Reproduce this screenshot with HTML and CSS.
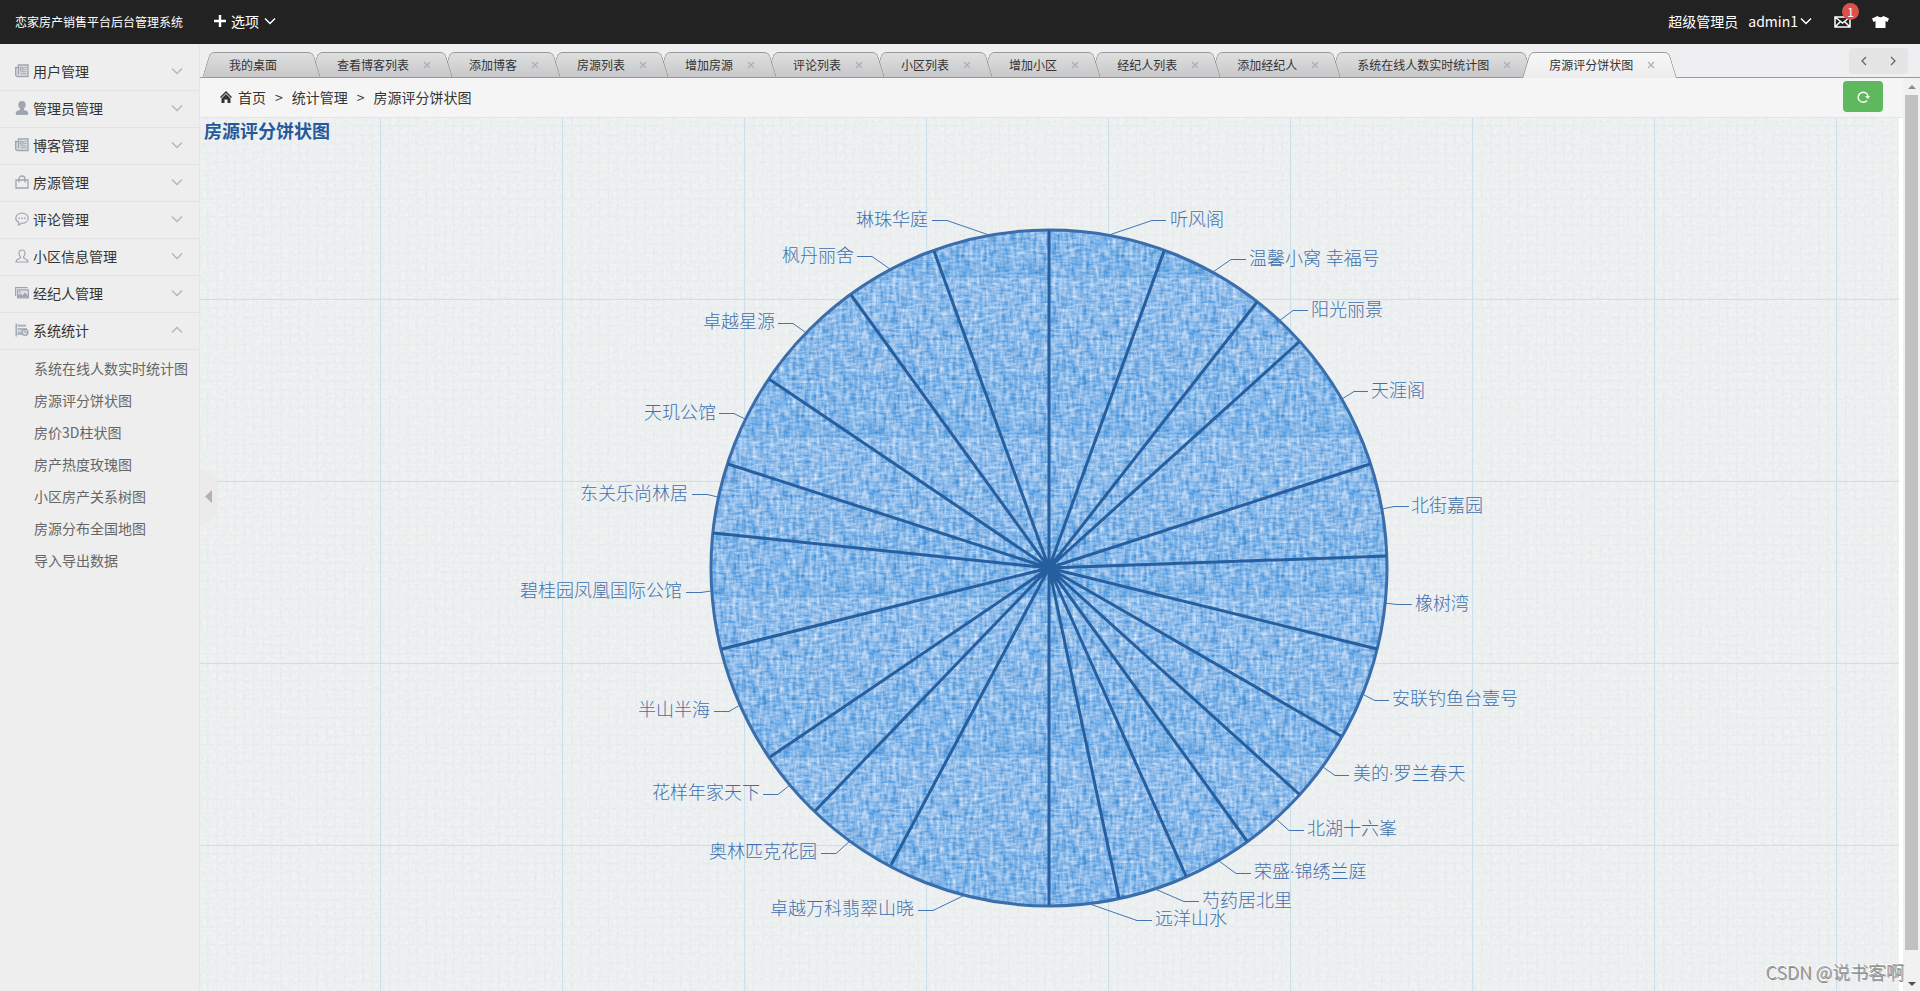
FILE: index.html
```html
<!DOCTYPE html>
<html lang="zh-CN">
<head>
<meta charset="utf-8">
<title>恋家房产销售平台后台管理系统</title>
<link rel="stylesheet" href="styles.css">
</head>
<body>
<svg class="sprite" aria-hidden="true">
  <symbol id="down" viewBox="0 0 12 8"><path d="M1 1.500 6 6.500 11 1.500" fill="none" stroke="currentColor" stroke-width="1.500"/></symbol>
  <symbol id="news" viewBox="0 0 14 14"><path d="M3.500 1h9.500v11.500H2.500A1.800 1.800 0 0 1 .700 10.700V3.500h2.800zM3.500 3.500v7" fill="#dcdfe4" stroke="currentColor" stroke-width="1.400"/><path d="M5.500 3.500H8V6H5.500zM9.300 3.500h2.200M9.300 5.500h2.200M5.500 7.700h6M5.500 9.700h6" fill="none" stroke="currentColor" stroke-width="1.100"/></symbol>
  <symbol id="person" viewBox="0 0 14 14"><path d="M7 0c2.500 0 3.700 1.600 3.700 3.800 0 1.600-.7 2.900-1.700 3.800v1.200c.7.900 4.300.9 4.300 3.200 0 1.100-.5 2-1.300 2H2c-.800 0-1.300-.900-1.300-2C.700 9.700 4.300 9.700 5 8.800V7.600C4 6.700 3.300 5.400 3.300 3.800 3.300 1.600 4.500 0 7 0z" fill="currentColor"/></symbol>
  <symbol id="person-o" viewBox="0 0 14 14"><path d="M7 1c2 0 3 1.300 3 3.200 0 1.500-.5 2.600-1.400 3.400v1.200c.5 1.200 4.400.9 4.400 4.200H1c0-3.300 3.900-3 4.400-4.200V7.600C4.500 6.800 4 5.700 4 4.200 4 2.300 5 1 7 1z" fill="none" stroke="currentColor" stroke-width="1.200"/></symbol>
  <symbol id="bag" viewBox="0 0 14 14"><path d="M1 5h12v8H1zM4 7.500V4a3 3 0 0 1 6 0v3.500" fill="none" stroke="currentColor" stroke-width="1.300"/></symbol>
  <symbol id="talk" viewBox="0 0 14 14"><path d="M7 1.200c3.600 0 6.200 2.100 6.200 5s-2.600 5-6.200 5l-3.600 1.800.4-2.600C1.900 9.500.800 8 .800 6.200c0-2.900 2.600-5 6.200-5z" fill="none" stroke="currentColor" stroke-width="1.200"/><path d="M3.500 5.500H5V7H3.500zM6.300 5.500h1.500V7H6.300zM9 5.500h1.500V7H9z" fill="currentColor"/></symbol>
  <symbol id="image" viewBox="0 0 14 14"><path d="M.6 10V1.700h12" fill="none" stroke="currentColor" stroke-width="1.300"/><path d="M2.600 3.800h10.800v8H2.600z" fill="#dcdfe4" stroke="currentColor" stroke-width="1.200"/><path d="M3 11.500V9.500l2.500-2 2 2L10 6.500l3 3v2z" fill="currentColor"/><circle cx="5" cy="5.800" r=".9" fill="currentColor"/></symbol>
  <symbol id="stats" viewBox="0 0 14 14"><path d="M1.200.500v13" stroke="currentColor" stroke-width="1.400"/><path d="M2.500 1.500h8.500v2.200H2.500zM2.500 5h9.500v2.200H2.500zM2.500 8.500H7v3.500H2.500z" fill="currentColor" opacity=".8"/><circle cx="10" cy="9.300" r="3" fill="#dcdfe4" stroke="currentColor" stroke-width="1.300"/><path d="M10 6.500v3h3" fill="none" stroke="currentColor"/></symbol>
  <symbol id="cross" viewBox="0 0 8 8"><path d="m1 1 6 6M7 1 1 7" stroke="currentColor" stroke-width="1.300"/></symbol>
</svg>

<header class="topbar">
  <a class="brand" href="#">恋家房产销售平台后台管理系统</a>
  <button class="top-link options" type="button">
    <svg class="plus" viewBox="0 0 12 12"><path d="M6 0v12M0 6h12" stroke="currentColor" stroke-width="2.400"/></svg>
    选项<svg class="caret"><use href="#down"/></svg>
  </button>
  <div class="account">
    <span>超级管理员</span>
    <button class="top-link" type="button">admin1<svg class="caret"><use href="#down"/></svg></button>
    <a class="mail" href="#" aria-label="消息">
      <svg viewBox="0 0 17 12"><path d="M1 1h15v10H1zM1 1l7.500 6L16 1M1 11l5-5M16 11l-5-5" fill="none" stroke="currentColor" stroke-width="1.500"/></svg>
      <span class="badge">1</span>
    </a>
    <button class="top-link" type="button" aria-label="换肤">
      <svg class="shirt" viewBox="0 0 17 12"><path d="M5.500 0Q8.500 2.500 11.500 0L17 2.500 15.500 6 13.500 5V12h-10V5L1.500 6 0 2.500z" fill="currentColor"/></svg>
    </button>
  </div>
</header>

<div class="body">
  <nav class="sidebar">
    <button class="group" type="button"><svg><use href="#news"/></svg>用户管理<svg class="arrow"><use href="#down"/></svg></button>
    <button class="group" type="button"><svg><use href="#person"/></svg>管理员管理<svg class="arrow"><use href="#down"/></svg></button>
    <button class="group" type="button"><svg><use href="#news"/></svg>博客管理<svg class="arrow"><use href="#down"/></svg></button>
    <button class="group" type="button"><svg><use href="#bag"/></svg>房源管理<svg class="arrow"><use href="#down"/></svg></button>
    <button class="group" type="button"><svg><use href="#talk"/></svg>评论管理<svg class="arrow"><use href="#down"/></svg></button>
    <button class="group" type="button"><svg><use href="#person-o"/></svg>小区信息管理<svg class="arrow"><use href="#down"/></svg></button>
    <button class="group" type="button"><svg><use href="#image"/></svg>经纪人管理<svg class="arrow"><use href="#down"/></svg></button>
    <button class="group open" type="button" aria-expanded="true"><svg><use href="#stats"/></svg>系统统计<svg class="arrow"><use href="#down"/></svg></button>
    <ul class="sub">
      <li><a href="#">系统在线人数实时统计图</a></li>
      <li><a href="#">房源评分饼状图</a></li>
      <li><a href="#">房价3D柱状图</a></li>
      <li><a href="#">房产热度玫瑰图</a></li>
      <li><a href="#">小区房产关系树图</a></li>
      <li><a href="#">房源分布全国地图</a></li>
      <li><a href="#">导入导出数据</a></li>
    </ul>
  </nav>

  <main class="main">
    <button class="fold" type="button" aria-label="收起菜单"><svg viewBox="0 0 17 58"><path d="M0 0 17 9v40L0 58z" fill="#ebebeb"/><path d="M12 22v13l-7-6.500z" fill="#b2b2b2"/></svg></button>
    <div class="tabbar">
      <ul class="tabs">
        <li class="tab"><span>我的桌面</span></li>
        <li class="tab"><span>查看博客列表</span><button type="button" aria-label="关闭"><svg><use href="#cross"/></svg></button></li>
        <li class="tab"><span>添加博客</span><button type="button" aria-label="关闭"><svg><use href="#cross"/></svg></button></li>
        <li class="tab"><span>房源列表</span><button type="button" aria-label="关闭"><svg><use href="#cross"/></svg></button></li>
        <li class="tab"><span>增加房源</span><button type="button" aria-label="关闭"><svg><use href="#cross"/></svg></button></li>
        <li class="tab"><span>评论列表</span><button type="button" aria-label="关闭"><svg><use href="#cross"/></svg></button></li>
        <li class="tab"><span>小区列表</span><button type="button" aria-label="关闭"><svg><use href="#cross"/></svg></button></li>
        <li class="tab"><span>增加小区</span><button type="button" aria-label="关闭"><svg><use href="#cross"/></svg></button></li>
        <li class="tab"><span>经纪人列表</span><button type="button" aria-label="关闭"><svg><use href="#cross"/></svg></button></li>
        <li class="tab"><span>添加经纪人</span><button type="button" aria-label="关闭"><svg><use href="#cross"/></svg></button></li>
        <li class="tab"><span>系统在线人数实时统计图</span><button type="button" aria-label="关闭"><svg><use href="#cross"/></svg></button></li>
        <li class="tab active"><span>房源评分饼状图</span><button type="button" aria-label="关闭"><svg><use href="#cross"/></svg></button></li>
      </ul>
      <div class="pager">
        <button type="button" aria-label="向左"><svg viewBox="0 0 6 10"><path d="M5 1 1 5l4 4" fill="none" stroke="currentColor" stroke-width="1.300"/></svg></button>
        <button type="button" aria-label="向右"><svg viewBox="0 0 6 10"><path d="m1 1 4 4-4 4" fill="none" stroke="currentColor" stroke-width="1.300"/></svg></button>
      </div>
    </div>

    <div class="frame">
      <div class="page">
        <div class="crumbs">
          <svg class="home" viewBox="0 0 12 12"><path d="M6 0 0 6l1 1 5-5 5 5 1-1z" fill="currentColor"/><path d="m6 3 4.500 4.500V12h-3V8.500h-3V12h-3V7.500z" fill="currentColor"/></svg>
          <a href="#">首页</a><span class="sep">&gt;</span><span>统计管理</span><span class="sep">&gt;</span><span>房源评分饼状图</span>
          <button class="refresh" type="button" aria-label="刷新"><svg viewBox="0 0 14 14"><path d="M11 10.500A5 5 0 1 1 12 6" fill="none" stroke="currentColor" stroke-width="1.400"/><path d="M9 6h5l-2 3z" fill="currentColor"/></svg></button>
        </div>
        <div class="chart">
          <svg class="paper" aria-hidden="true">
            <defs>
              <filter id="grain" x="0" y="0" width="182" height="182" filterUnits="userSpaceOnUse" color-interpolation-filters="sRGB">
                <feTurbulence type="fractalNoise" baseFrequency="0.3" numOctaves="3" seed="4" stitchTiles="stitch"/>
                <feColorMatrix values=".06 0 0 0 .902  .05 0 0 0 .917  .05 0 0 0 .918  0 0 0 0 1"/>
              </filter>
              <pattern id="minor" width="9.100" height="9.100" patternUnits="userSpaceOnUse"><path d="M8 0v9.100M0 8h9.100" stroke="#c9d8dd" stroke-opacity=".2"/></pattern>
              <pattern id="sheet" width="182" height="182" patternUnits="userSpaceOnUse">
                <rect width="182" height="182" filter="url(#grain)"/>
                <rect width="182" height="182" fill="url(#minor)"/>
                <path d="M180.500 0v182M0 181.500h182" stroke="#cde0ea"/>
              </pattern>
            </defs>
            <rect width="100%" height="100%" fill="url(#sheet)"/>
          </svg>
          <svg class="pie" viewBox="200 118 1699 873" role="img" aria-label="房源评分饼状图">
            <defs>
              <filter id="pencil" x="0" y="0" width="160" height="160" filterUnits="userSpaceOnUse" color-interpolation-filters="sRGB">
                <feTurbulence type="fractalNoise" baseFrequency="0.3 0.06" numOctaves="4" seed="7" stitchTiles="stitch" result="v"/>
                <feTurbulence type="fractalNoise" baseFrequency="0.1 0.35" numOctaves="3" seed="12" stitchTiles="stitch" result="h"/>
                <feComposite in="v" in2="h" operator="arithmetic" k2=".5" k3=".5"/>
                <feColorMatrix values="1.400 0 0 0 -.16  .8 0 0 0 .33  .3 0 0 0 .765  0 0 0 0 1"/>
              </filter>
              <linearGradient id="band" x2="0" y2="1"><stop offset="0" stop-color="#a6c8f0" stop-opacity=".25"/><stop offset=".4" stop-color="#8ab4e6" stop-opacity=".2"/><stop offset="1" stop-color="#6aa8e4" stop-opacity=".25"/></linearGradient>
              <pattern id="crayon" x="200" y="118" width="160" height="160" patternUnits="userSpaceOnUse">
                <rect width="160" height="160" filter="url(#pencil)"/>
                <rect width="160" height="160" fill="url(#band)"/>
              </pattern>
            </defs>
            <text class="title" x="204" y="138">房源评分饼状图</text>
            <circle class="disc" cx="1049" cy="568" r="338" fill="url(#crayon)"/>
            <path class="spokes" d="M1049 568V230M1049 568 1164 251M1049 568 1257 302M1049 568 1299 342M1049 568 1370 464M1049 568 1387 556M1049 568 1377 649M1049 568 1341 736M1049 568 1299 794M1049 568 1247 841M1049 568 1186 876M1049 568 1119 898M1049 568V905M1049 568 891 865M1049 568 815 811M1049 568 770 757M1049 568 722 649M1049 568 713 533M1049 568 728 464M1049 568 769 379M1049 568 851 295M1049 568 934 251"/>
            <path class="leads" d="M1109 235 1152 220.500h14M1213 272 1231 259.500h15M1279 321 1293 310.500h15M1342 399 1354 391.500h14M1382 509 1394 506.500h15M1385 603 1397 604.500h15M1364 695 1375 700.500h14M1323 767 1335 775.500h14M1276 819 1289 830.500h15M1219 861 1236 873.500h15M1155 889 1184 901.500h15M1087 903 1137 920.500h15M989 235 947 220.500h-15M890 269 872 256.500h-15M805 332 793 323.500h-15M745 419 734 413.500h-15M718 497 707 494.500h-15M711 591 701 592.500h-15M740 705 729 711.500h-15M790 785 778 794.500h-15M850 841 836 853.500h-15M965 895 933 910.500h-15"/>
            <g class="names">
              <text x="1170" y="226">听风阁</text>
              <text x="1249" y="265">温馨小窝 幸福号</text>
              <text x="1311" y="316">阳光丽景</text>
              <text x="1371" y="397">天涯阁</text>
              <text x="1411" y="512">北街嘉园</text>
              <text x="1415" y="610">橡树湾</text>
              <text x="1392" y="705">安联钓鱼台壹号</text>
              <text x="1353" y="780">美的·罗兰春天</text>
              <text x="1307" y="835">北湖十六峯</text>
              <text x="1254" y="878">荣盛·锦绣兰庭</text>
              <text x="1202" y="907">芍药居北里</text>
              <text x="1155" y="925">远洋山水</text>
            </g>
            <g class="names left">
              <text x="928" y="226">琳珠华庭</text>
              <text x="854" y="262">枫丹丽舍</text>
              <text x="775" y="328">卓越星源</text>
              <text x="716" y="419">天玑公馆</text>
              <text x="688" y="500">东关乐尚林居</text>
              <text x="682" y="597">碧桂园凤凰国际公馆</text>
              <text x="710" y="716">半山半海</text>
              <text x="760" y="799">花样年家天下</text>
              <text x="817" y="858">奥林匹克花园</text>
              <text x="914" y="915">卓越万科翡翠山晓</text>
            </g>
          </svg>
        </div>
      </div>
      <div class="scroll" aria-hidden="true"><i class="up"></i><i class="thumb"></i><i class="dn"></i></div>
    </div>
  </main>
</div>
<div class="watermark">CSDN @说书客啊</div>
</body>
</html>
```
FILE: styles.css
```css
* { box-sizing: border-box; }
body {
  margin: 0;
  height: 100vh;
  display: flex;
  flex-direction: column;
  overflow: hidden;
  font: 14px/20px "Noto Sans CJK SC", sans-serif;
  color: #333;
  background: #fff;
}
button { padding: 0; border: 0; background: none; font: inherit; color: inherit; cursor: pointer; }
a { color: inherit; text-decoration: none; }
ul { margin: 0; padding: 0; list-style: none; }
svg { display: block; }
.sprite { position: absolute; width: 0; height: 0; }

.topbar { flex: none; height: 44px; display: flex; align-items: center; padding: 0 31px 2px 15px; background: #222; color: #fff; }
.brand { font-size: 12px; padding-top: 2px; }
.top-link { display: flex; align-items: center; }
.caret { width: 12px; height: 8px; margin-left: 2px; }
.options { margin-left: 31px; }
.plus { width: 12px; height: 12px; margin-right: 5px; }
.options .caret { margin-left: 5px; }
.account { margin-left: auto; display: flex; align-items: center; gap: 10px; }
.mail { position: relative; margin: 2px 11px 0 12px; }
.mail svg { width: 17px; height: 12px; }
.badge { position: absolute; left: 8px; top: -13px; width: 17px; height: 17px; border-radius: 50%; background: #dd514c; font-size: 12px; line-height: 17px; text-align: center; }
.shirt { width: 17px; height: 12px; margin-top: 2px; }

.body { flex: 1; min-height: 0; display: flex; }
.sidebar { flex: none; width: 200px; padding-top: 10px; background: #eee; border-right: 1px solid #e5e5e5; }
.group { display: flex; align-items: center; gap: 4px; width: 100%; height: 37px; padding: 0 16px 2px 15px; border-bottom: 1px solid #e2e2e2; text-align: left; }
.group svg { width: 14px; height: 14px; color: #a0a6b1; }
.group .arrow { width: 12px; height: 8px; margin-left: auto; color: #b6b7b8; }
.open .arrow { transform: rotate(180deg); }
.sub { padding-top: 2px; color: #666; }
.sub a { display: block; padding-left: 34px; line-height: 32px; white-space: nowrap; }

.main { position: relative; flex: 1; min-width: 0; display: flex; flex-direction: column; }
.fold { position: absolute; left: 0; top: 424px; z-index: 20; }
.fold svg { width: 17px; height: 58px; }
.tabbar { flex: none; display: flex; align-items: flex-end; height: 34px; border-bottom: 1px solid #999; background: #efeef0; }
.tabs { display: flex; padding-left: 2px; font-size: 12px; line-height: 26px; }
.tab { position: relative; display: flex; align-items: center; height: 26px; margin-bottom: -1px; padding: 0 11px 0 27px; white-space: nowrap; }
.tab:first-child { padding-right: 33px; }
.tab::before, .tab::after { content: ""; position: absolute; top: 0; bottom: 0; z-index: -1; border: 1px solid #999; background: linear-gradient(#dedfdf, #c8c8ca); transform-origin: bottom; }
.tab::before { left: 0; right: 50%; border-right: 0; border-top-left-radius: 5px; transform: skewX(-17deg); }
.tab::after { left: 40%; right: -11px; border-left: 0; border-top-right-radius: 5px; transform: skewX(17deg); }
.tab:nth-child(1) { z-index: 11; }
.tab:nth-child(2) { z-index: 10; }
.tab:nth-child(3) { z-index: 9; }
.tab:nth-child(4) { z-index: 8; }
.tab:nth-child(5) { z-index: 7; }
.tab:nth-child(6) { z-index: 6; }
.tab:nth-child(7) { z-index: 5; }
.tab:nth-child(8) { z-index: 4; }
.tab:nth-child(9) { z-index: 3; }
.tab:nth-child(10) { z-index: 2; }
.tab:nth-child(11) { z-index: 1; }
.tab.active { z-index: 12; }
.tab.active::before, .tab.active::after { background: linear-gradient(#f7f7f7, #ececee); border-bottom: 0; }
.tab button { margin-left: 14px; color: #a9b0b7; }
.tab button svg { width: 8px; height: 8px; }
.pager { margin: 0 12px 3px auto; width: 59px; height: 26px; display: flex; border-radius: 4px; background: #e5e5e5; color: #666; }
.pager button { flex: 1; display: flex; align-items: center; justify-content: center; }
.pager svg { width: 6px; height: 10px; }

.frame { flex: 1; min-height: 0; display: flex; }
.page { flex: 1; min-width: 0; display: flex; flex-direction: column; }
.crumbs { flex: none; height: 40px; display: flex; align-items: center; padding: 0 20px 2px; background: #f5f5f5; border-bottom: 1px solid #e5e5e5; }
.home { width: 12px; height: 12px; margin-right: 6px; }
.sep { margin: 0 9px; }
.refresh { margin-left: auto; width: 40px; height: 31px; border-radius: 4px; background: #5eb95e; color: #fff; display: flex; align-items: center; justify-content: center; }
.refresh svg { width: 14px; height: 14px; }
.chart { position: relative; flex: 1; min-height: 0; margin-right: 4px; }
.paper, .pie { position: absolute; inset: 0; width: 100%; height: 100%; }
.pie { overflow: visible; }
.title { font-size: 18px; font-weight: 700; fill: #26599b; }
.disc { stroke: #3a6dab; stroke-width: 3px; }
.spokes { fill: none; stroke: #265f9f; stroke-width: 3px; }
.leads { fill: none; stroke: #4376b0; stroke-width: 1px; }
.names { font-family: "Noto Sans", "Noto Sans CJK SC", sans-serif; font-size: 18px; font-weight: 300; fill: #3f70ad; }
.names.left { text-anchor: end; }

.scroll { flex: none; width: 17px; display: flex; flex-direction: column; align-items: center; padding: 7px 0 5px; background: #f1f1f1; }
.up { border: 4px solid transparent; border-top: 0; border-bottom-color: #8b8b8b; }
.thumb { flex: 1; width: 13px; margin: 6px 0 32px; background: #c1c1c1; }
.dn { border: 4px solid transparent; border-bottom: 0; border-top-color: #505050; }
.watermark { position: absolute; right: 16px; bottom: 8px; z-index: 30; font: 300 18px/24px "Noto Sans CJK SC", sans-serif; color: #999; text-shadow: 1px 1px 0 #888, -1px -1px 0 #fff; }
```
